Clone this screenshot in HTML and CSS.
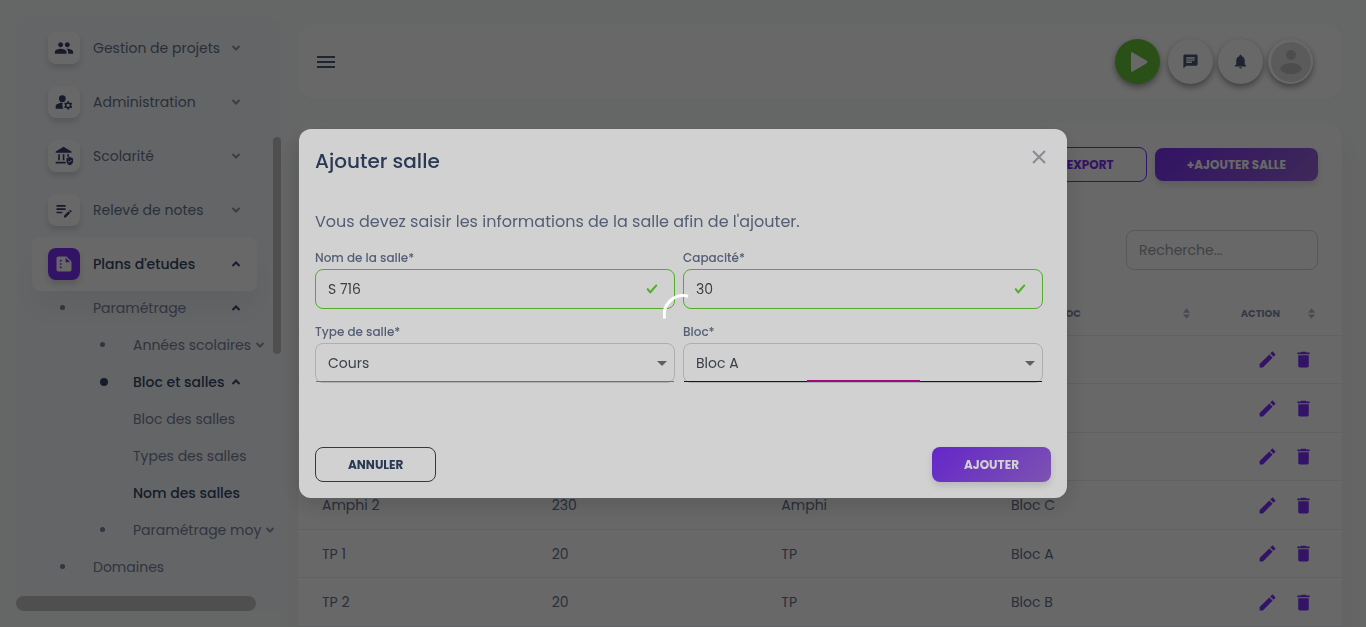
FILE: index.html
```
<!DOCTYPE html>
<html lang="fr">
<head>
<meta charset="utf-8">
<meta name="viewport" content="width=device-width, initial-scale=1">
<title>Nom des salles</title>
<link rel="stylesheet" href="styles.css">
</head>
<body>
<svg class="sprite" aria-hidden="true">
  <symbol id="down" viewBox="0 0 10 8"><path d="M1.500 2 5 5.500 8.500 2" fill="none" stroke="currentColor" stroke-width="2"/></symbol>
  <symbol id="up" viewBox="0 0 10 8"><path d="M1.500 6 5 2.500 8.500 6" fill="none" stroke="currentColor" stroke-width="2"/></symbol>
  <symbol id="edit" viewBox="0 0 24 24"><path d="M3 17.250V21h3.750L17.810 9.940l-3.750-3.750L3 17.250zM20.710 7.040c.39-.39.39-1.020 0-1.410l-2.340-2.340c-.39-.39-1.020-.39-1.410 0l-1.830 1.830 3.750 3.750 1.830-1.830z"/></symbol>
  <symbol id="delete" viewBox="0 0 24 24"><path d="M6 19c0 1.100.9 2 2 2h8c1.100 0 2-.9 2-2V7H6v12zM19 4h-3.500l-1-1h-5l-1 1H5v2h14V4z"/></symbol>
  <symbol id="sort" viewBox="0 0 8 12"><path d="M4 0 8 5H0zM4 12 0 7h8z"/></symbol>
  <symbol id="check" viewBox="0 0 8 8"><path d="M2.300 6.730.6 4.530c-.4-1.040.46-1.400 1.100-.8l1.100 1.400 3.400-3.800c.6-.63 1.600-.27 1.200.7l-4 4.600c-.43.5-.8.4-1.100.1z"/></symbol>
</svg>

<div class="app">
  <aside class="sidebar">
    <nav class="menu">
      <a class="item" href="#"><span class="tile"><svg viewBox="0 0 24 24"><path d="M16 11c1.660 0 2.990-1.340 2.990-3S17.660 5 16 5c-1.660 0-3 1.340-3 3s1.340 3 3 3zm-8 0c1.660 0 2.990-1.340 2.990-3S9.660 5 8 5C6.340 5 5 6.340 5 8s1.340 3 3 3zm0 2c-2.330 0-7 1.170-7 3.500V19h14v-2.500c0-2.330-4.670-3.500-7-3.500zm8 0c-.29 0-.62.02-.97.05 1.160.84 1.970 1.970 1.970 3.450V19h6v-2.500c0-2.330-4.670-3.500-7-3.500z"/></svg></span><span class="label">Gestion de projets</span><svg class="chev"><use href="#down"/></svg></a>
      <a class="item" href="#"><span class="tile"><svg viewBox="0 0 24 24"><circle cx="10" cy="8" r="4"/><path d="M10.670 13.020C10.450 13.010 10.230 13 10 13c-2.420 0-4.680.67-6.610 1.820C2.510 15.340 2 16.320 2 17.350V20h9.260C10.470 18.870 10 17.490 10 16c0-1.070.25-2.070.67-2.980z"/><path fill-rule="evenodd" d="M20.750 16c0-.22-.03-.42-.06-.63l1.140-1.010-1-1.730-1.450.49c-.32-.27-.68-.48-1.080-.63L18 11h-2l-.3 1.490c-.4.15-.76.36-1.080.63l-1.450-.49-1 1.730 1.140 1.010c-.03.21-.06.41-.06.63s.03.42.06.63l-1.140 1.010 1 1.730 1.450-.49c.32.27.68.48 1.080.63L16 21h2l.3-1.490c.4-.15.76-.36 1.080-.63l1.450.49 1-1.730-1.140-1.010c.03-.21.06-.41.06-.63zM17 18c-1.100 0-2-.9-2-2s.9-2 2-2 2 .9 2 2-.9 2-2 2z"/></svg></span><span class="label">Administration</span><svg class="chev"><use href="#down"/></svg></a>
      <a class="item" href="#"><span class="tile"><svg viewBox="0 0 24 24"><path d="M2 6.500 11.500 1 21 6.500V8H2zM5 10h2v7H5zM10.500 10h2v7h-2zM16 10h2v2.500l-2 1zM2 19h12v2H2zM19 13l4 2v3c0 2.500-1.700 4.500-4 5-2.300-.5-4-2.500-4-5v-3z"/><path d="m17 18 1.500 1.500 2.700-2.800" fill="none" stroke="#fff" stroke-width="1.200"/></svg></span><span class="label">Scolarité</span><svg class="chev"><use href="#down"/></svg></a>
      <a class="item" href="#"><span class="tile"><svg viewBox="0 0 24 24"><path d="M3 10h11v2H3v-2zm0-2h11V6H3v2zm0 8h7v-2H3v2zm15.010-3.130.71-.71c.39-.39 1.020-.39 1.410 0l.71.71c.39.39.39 1.020 0 1.410l-.71.71-2.120-2.120zm-.71.71-5.300 5.300V21h2.120l5.300-5.300-2.120-2.120z"/></svg></span><span class="label">Relevé de notes</span><svg class="chev"><use href="#down"/></svg></a>
      <a class="item item-active" href="#"><span class="tile"><svg viewBox="0 0 24 24"><path fill-rule="evenodd" d="M15 3H5C3.900 3 3 3.900 3 5v14c0 1.100.9 2 2 2h14c1.100 0 2-.9 2-2V9zM7 7h2v2H7zm0 4h2v2H7zm0 4h2v2H7zm7-5V4.500L19.500 10z"/></svg></span><span class="label">Plans d'etudes</span><svg class="chev"><use href="#up"/></svg></a>
      <div class="submenu">
        <a class="sub" href="#"><i class="dot"></i><span class="label">Paramétrage</span><svg class="chev chev-dark"><use href="#up"/></svg></a>
        <a class="sub sub-deep" href="#"><i class="dot"></i><span class="label">Années scolaires</span><svg class="chev"><use href="#down"/></svg></a>
        <a class="sub sub-deep sub-on" href="#"><i class="dot"></i><span class="label">Bloc et salles</span><svg class="chev"><use href="#up"/></svg></a>
        <a class="sub sub-deep" href="#"><span class="label">Bloc des salles</span></a>
        <a class="sub sub-deep" href="#"><span class="label">Types des salles</span></a>
        <a class="sub sub-deep sub-on" href="#"><span class="label">Nom des salles</span></a>
        <a class="sub sub-deep" href="#"><i class="dot"></i><span class="label">Paramétrage moy</span><svg class="chev"><use href="#down"/></svg></a>
        <a class="sub" href="#"><i class="dot"></i><span class="label">Domaines</span></a>
      </div>
    </nav>
    <div class="thumb-y"></div>
    <div class="thumb-x"></div>
  </aside>

  <main class="main">
    <header class="topbar">
      <button class="burger" type="button" aria-label="Menu"><span></span><span></span><span></span></button>
      <div class="actions">
        <button class="round play" type="button" aria-label="Lecture"><svg viewBox="0 0 24 24"><path d="M4 3.500v17c0 1 .9 1.500 1.700 1l14-8.300c.8-.5.8-1.900 0-2.400l-14-8.300c-.8-.5-1.700 0-1.700 1z"/></svg></button>
        <button class="round" type="button" aria-label="Messages"><svg viewBox="0 0 24 24"><path d="M20 2H4c-1.100 0-1.990.9-1.990 2L2 22l4-4h14c1.100 0 2-.9 2-2V4c0-1.100-.9-2-2-2zM6 9h12v2H6V9zm8 5H6v-2h8v2zm4-6H6V6h12v2z"/></svg></button>
        <button class="round" type="button" aria-label="Notifications"><svg viewBox="0 0 24 24"><path d="M12 22c1.100 0 2-.9 2-2h-4c0 1.100.89 2 2 2zm6-6v-5c0-3.070-1.640-5.640-4.500-6.320V4c0-.83-.67-1.500-1.500-1.500s-1.500.67-1.500 1.500v.68C7.630 5.360 6 7.920 6 11v5l-2 2v1h16v-1l-2-2z"/></svg></button>
        <button class="round avatar" type="button" aria-label="Profil"><svg viewBox="0 0 40 40"><circle cx="20" cy="20" r="20" fill="#e0e0e0"/><circle cx="20" cy="13" r="5" fill="#bcbcbc"/><path d="M9 27c2-8 20-8 22 0-4 7-18 7-22 0z" fill="#bcbcbc"/></svg></button>
      </div>
    </header>

    <section class="card">
      <div class="tools">
        <button class="btn btn-line" type="button">EXPORT</button>
        <button class="btn btn-fill" type="button">+AJOUTER SALLE</button>
      </div>
      <div class="search"><input class="field" type="search" placeholder="Recherche..." aria-label="Recherche"></div>
      <table class="rooms">
        <thead><tr>
          <th></th><th></th><th></th>
          <th><div class="head"><span>NOM DU BLOC</span><svg><use href="#sort"/></svg></div></th>
          <th><div class="head"><span>ACTION</span><svg><use href="#sort"/></svg></div></th>
        </tr></thead>
        <tbody>
          <tr><td></td><td></td><td></td><td></td><td><div class="ops"><button type="button" aria-label="Modifier"><svg><use href="#edit"/></svg></button><button type="button" aria-label="Supprimer"><svg><use href="#delete"/></svg></button></div></td></tr>
          <tr><td></td><td></td><td></td><td></td><td><div class="ops"><button type="button" aria-label="Modifier"><svg><use href="#edit"/></svg></button><button type="button" aria-label="Supprimer"><svg><use href="#delete"/></svg></button></div></td></tr>
          <tr><td></td><td></td><td></td><td></td><td><div class="ops"><button type="button" aria-label="Modifier"><svg><use href="#edit"/></svg></button><button type="button" aria-label="Supprimer"><svg><use href="#delete"/></svg></button></div></td></tr>
          <tr><td>Amphi 2</td><td>230</td><td>Amphi</td><td>Bloc C</td><td><div class="ops"><button type="button" aria-label="Modifier"><svg><use href="#edit"/></svg></button><button type="button" aria-label="Supprimer"><svg><use href="#delete"/></svg></button></div></td></tr>
          <tr><td>TP 1</td><td>20</td><td>TP</td><td>Bloc A</td><td><div class="ops"><button type="button" aria-label="Modifier"><svg><use href="#edit"/></svg></button><button type="button" aria-label="Supprimer"><svg><use href="#delete"/></svg></button></div></td></tr>
          <tr><td>TP 2</td><td>20</td><td>TP</td><td>Bloc B</td><td><div class="ops"><button type="button" aria-label="Modifier"><svg><use href="#edit"/></svg></button><button type="button" aria-label="Supprimer"><svg><use href="#delete"/></svg></button></div></td></tr>
        </tbody>
      </table>
    </section>
  </main>
</div>

<div class="backdrop">
  <form class="modal" role="dialog" aria-labelledby="modal-title">
    <div class="modal-head">
      <h2 id="modal-title">Ajouter salle</h2>
      <button class="close" type="button" aria-label="Fermer"><svg viewBox="0 0 14 14"><path d="m1 1 12 12M13 1 1 13" fill="none" stroke="currentColor" stroke-width="2"/></svg></button>
    </div>
    <p class="intro">Vous devez saisir les informations de la salle afin de l'ajouter.</p>
    <div class="grid">
      <div class="group">
        <label for="nom">Nom de la salle*</label>
        <div class="control"><input class="field valid" id="nom" type="text" value="S 716"><svg class="tick"><use href="#check"/></svg></div>
      </div>
      <div class="group">
        <label for="capacite">Capacité*</label>
        <div class="control"><input class="field valid" id="capacite" type="text" value="30"><svg class="tick"><use href="#check"/></svg></div>
      </div>
      <div class="group">
        <label for="type">Type de salle*</label>
        <div class="control pick"><select class="field" id="type"><option>Cours</option></select></div>
      </div>
      <div class="group">
        <label for="bloc">Bloc*</label>
        <div class="control pick pick-focus"><select class="field" id="bloc"><option>Bloc A</option></select></div>
      </div>
    </div>
    <div class="modal-foot">
      <button class="btn btn-dark" type="button">ANNULER</button>
      <button class="btn btn-fill" type="submit">AJOUTER</button>
    </div>
  </form>
</div>

<div class="loading"><svg class="spinner" viewBox="0 0 40 40"><path d="M1.700 24.500A19 19 0 0 1 25 2.200" fill="none" stroke="#fff" stroke-width="3"/></svg></div>
</body>
</html>
```
FILE: styles.css
```
* { box-sizing: border-box; }

body {
  margin: 0;
  height: 100vh;
  overflow: hidden;
  background: #f8f9fa;
  color: #67748e;
  font: 14px/20px Poppins, Inter, "Open Sans", sans-serif;
}

a { color: inherit; text-decoration: none; }
button, input, select { font: inherit; color: inherit; }
button { border: 0; background: none; padding: 0; cursor: pointer; }
svg { display: block; flex: none; fill: currentColor; }
.sprite { position: absolute; width: 0; height: 0; }

.app { display: flex; height: 100vh; gap: 17px; padding: 16px 24px 16px 16px; overflow: hidden; }

/* Sidebar */
.sidebar {
  position: relative;
  flex: none;
  width: 265px;
  overflow: hidden;
  border-radius: 16px 16px 0 0;
  background: #f5f8fc;
}
.menu { padding: 5px 24px 0 16px; }
.item, .sub { display: flex; align-items: center; white-space: nowrap; }
.item { height: 54px; padding: 0 16px; border-radius: 8px; }
.item .label { flex: 1; }
.tile {
  display: grid;
  place-items: center;
  flex: none;
  width: 32px;
  height: 32px;
  margin-right: 13px;
  border-radius: 8px;
  background: #fff;
  color: #3a416f;
  box-shadow: 0 4px 6px rgba(0, 0, 0, .14);
}
.tile svg { width: 20px; height: 20px; }
.chev { width: 10px; height: 8px; color: #8d96a8; }
.item-active {
  background: #fff;
  color: #344767;
  font-weight: 500;
  box-shadow: 0 20px 27px rgba(0, 0, 0, .05);
}
.item-active .tile { background: #7b2ff7; color: #fff; }
.item-active .chev, .sub-on .chev, .chev-dark { color: #344767; }
.submenu { margin-top: -2px; }
.sub { height: 37px; padding-left: 61px; color: #7b809a; position: relative; }
.sub .label { flex: none; min-width: 138px; }
.sub-deep { padding-left: 101px; }
.sub-deep .label { min-width: 94px; margin-right: 4px; }
.dot {
  position: absolute;
  left: 28px;
  width: 5px;
  height: 5px;
  border-radius: 50%;
  background: currentColor;
}
.sub-deep .dot { left: 68px; }
.sub-on { color: #344767; font-weight: 500; }
.sub-on .dot { width: 8px; height: 8px; }
.thumb-y, .thumb-x { position: absolute; background: #c2c2c2; border-radius: 8px; }
.thumb-y { right: 0; top: 121px; width: 8px; height: 217px; }
.thumb-x { left: 0; bottom: 0; width: 240px; height: 15px; }

/* Top bar */
.main { flex: 1; min-width: 0; padding-top: 8px; }
.topbar {
  display: flex;
  align-items: center;
  justify-content: space-between;
  height: 75px;
  padding: 0 29px 0 19px;
  border-radius: 16px;
  background: #fff;
  box-shadow: 0 0 2px rgba(0, 0, 0, .04);
}
.burger { display: grid; gap: 3px; width: 18px; }
.burger span { height: 2px; background: #4a5878; }
.actions { display: flex; gap: 5px; }
.round {
  display: grid;
  place-items: center;
  width: 45px;
  height: 45px;
  border-radius: 50%;
  background: #fff;
  color: #4a5878;
  box-shadow: 0 3px 6px rgba(0, 0, 0, .4);
}
.round svg { width: 17px; height: 17px; }
.play { margin-right: 3px; padding-left: 2px; background: #67c43c; color: #fff; }
.play svg { width: 24px; height: 24px; }
.avatar svg { width: 40px; height: 40px; }

/* Rooms card */
.card {
  margin-top: 24px;
  padding-top: 24px;
  height: 640px;
  border-radius: 16px;
  background: #fff;
  box-shadow: 0 20px 27px rgba(0, 0, 0, .05);
}
.tools { display: flex; justify-content: flex-end; align-items: center; gap: 8px; padding: 0 24px; }
.btn {
  height: 35px;
  padding: 0 32px;
  border-radius: 8px;
  font-size: 12px;
  line-height: 18px;
  font-weight: 700;
}
.btn-line { border: 1px solid #7b2ff7; color: #7b2ff7; }
.btn-dark { border: 1px solid #344767; color: #344767; }
.btn-fill {
  background: linear-gradient(135deg, #7b2ff7, #9866d8);
  color: #fff;
  box-shadow: 0 4px 7px rgba(0, 0, 0, .12);
}
.tools .btn-fill { height: 33px; }
.search { display: flex; justify-content: flex-end; padding: 48px 24px 0; }
.search .field { width: 192px; }
.field {
  width: 100%;
  height: 40px;
  padding: 0 12px;
  border: 1px solid #d2d6da;
  border-radius: 8px;
  background: #fff;
  color: #495057;
  outline: 0;
}
.field::placeholder { color: #9a9fa5; opacity: 1; }
.rooms {
  width: 100%;
  margin-top: 22px;
  table-layout: fixed;
  border-collapse: separate;
  border-spacing: 0;
  color: #67748e;
}
.rooms th, .rooms td { padding: 0 24px; border-bottom: 1px solid #eceef0; text-align: left; }
.rooms th { width: 22%; height: 44px; font-size: 10px; font-weight: 700; color: #8392ab; }
.rooms th:last-child { width: 12%; }
.rooms td { height: 49px; }
.rooms tr:nth-child(odd) td { height: 48px; }
.head { display: flex; align-items: center; justify-content: space-between; padding-right: 3px; }
.head svg { width: 7px; height: 11px; color: #aeb6c4; }
.rooms th:last-child, .rooms td:last-child { padding-right: 0; }
.rooms th:last-child .head { padding-right: 27px; }
.ops { display: flex; gap: 15px; padding-left: 16px; color: #7b2ff7; }
.ops svg { width: 21px; height: 21px; }

/* Dialog */
.backdrop {
  position: fixed;
  inset: 0;
  display: grid;
  place-items: center;
  background: rgba(0, 0, 0, .5);
}
.modal {
  width: 768px;
  max-width: 100%;
  padding: 16px;
  border-radius: 12px;
  background: #fff;
  box-shadow: 0 8px 26px rgba(20, 20, 20, .15);
}
.modal-head { display: flex; justify-content: space-between; align-items: flex-start; }
.modal-head h2 { margin: 0; color: #344767; font-size: 20px; line-height: 32px; font-weight: 500; }
.close { padding: 5px; color: #a4abb4; }
.close svg { width: 14px; height: 14px; }
.intro { margin: 33px 0 0; font-size: 16px; line-height: 24px; }
.grid { display: grid; grid-template-columns: 1fr 1fr; gap: 14px 8px; padding: 15px 8px 0 0; }
.group label { display: block; margin-bottom: 2px; font-size: 12px; line-height: 18px; font-weight: 500; }
.control { position: relative; }
.control .field { display: block; }
.valid { border-color: #66d432; }
.tick { position: absolute; right: 17px; top: 14px; width: 12px; height: 12px; color: #66d432; }
.pick select { appearance: none; }
.pick::before {
  content: "";
  position: absolute;
  right: 8px;
  top: 18px;
  border: 5px solid transparent;
  border-top-color: #757575;
  border-bottom: 0;
}
.pick::after {
  content: "";
  position: absolute;
  left: 1px;
  right: 1px;
  bottom: 1px;
  height: 1px;
  background: #8c8c8c;
}
.pick-focus::after {
  height: 2px;
  background:
    linear-gradient(#c40a9c, #c40a9c) 50% 0 / 113px 2px no-repeat,
    linear-gradient(#222, #222) 0 100% / 100% 1px no-repeat;
}
.modal-foot { display: flex; justify-content: space-between; padding-top: 64px; }

/* Loading veil */
.loading {
  position: fixed;
  inset: 0;
  display: grid;
  place-items: center;
  background: rgba(0, 0, 0, .18);
}
.spinner { width: 40px; height: 40px; }
```
